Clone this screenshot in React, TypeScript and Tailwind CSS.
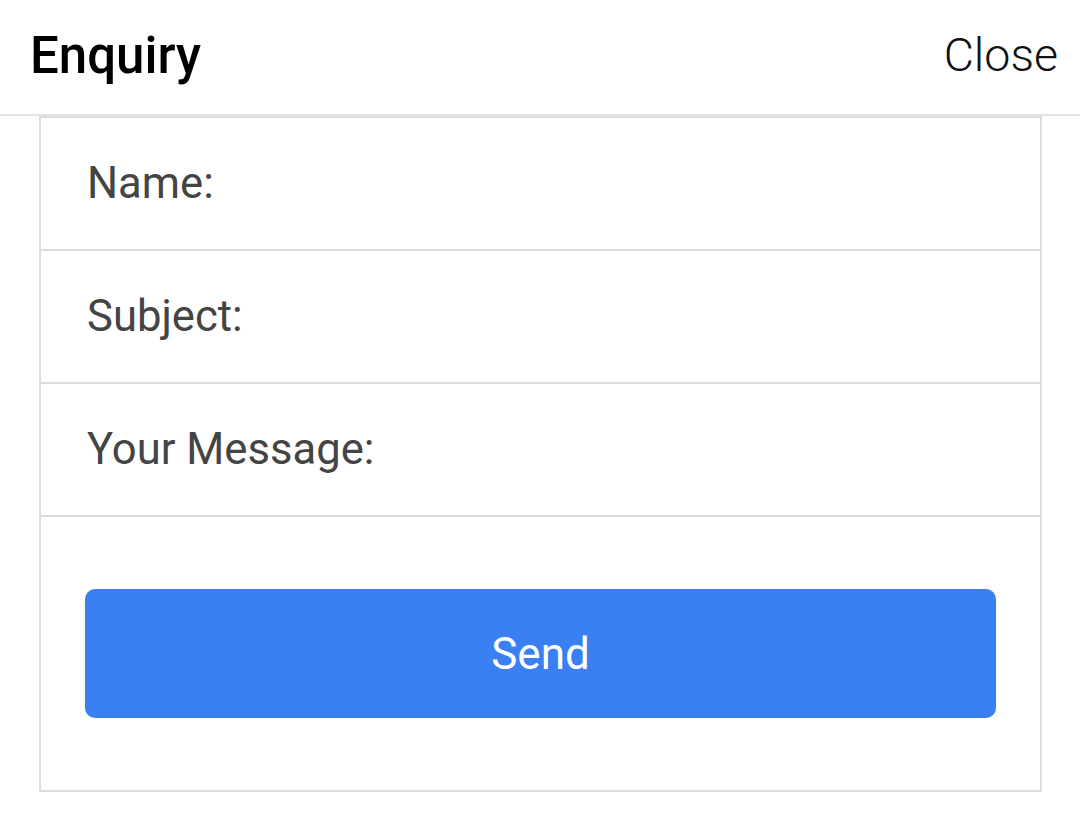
export default function App() {
  const fields = ['Name:', 'Subject:', 'Your Message:'];

  return (
    <div className="min-h-[838px] bg-white font-['Roboto','Liberation_Sans',sans-serif]">
      <header className="flex h-[116px] items-center justify-between border-b-2 border-[#e3e3e3] pl-[30px] pr-[22px] pb-[4px]">
        <h1 className="text-[51px] font-medium leading-none text-black">Enquiry</h1>
        <button className="text-[46.5px] font-light leading-none text-[#111]">Close</button>
      </header>

      <form className="ml-[39px] w-[1003px] border-2 border-[#dcdcdc]">
        {fields.map((label) => (
          <div key={label} className="flex h-[133px] items-center border-b-2 border-[#dcdcdc] pl-[46px]">
            <span className="text-[43.6px] leading-none text-[#444]">{label}</span>
          </div>
        ))}
        <div className="px-[44px] py-[72px]">
          <button
            type="button"
            className="flex h-[129px] w-full items-center justify-center rounded-[10px] bg-[#3a80f2] text-[44px] leading-none text-white"
          >
            Send
          </button>
        </div>
      </form>
    </div>
  );
}
